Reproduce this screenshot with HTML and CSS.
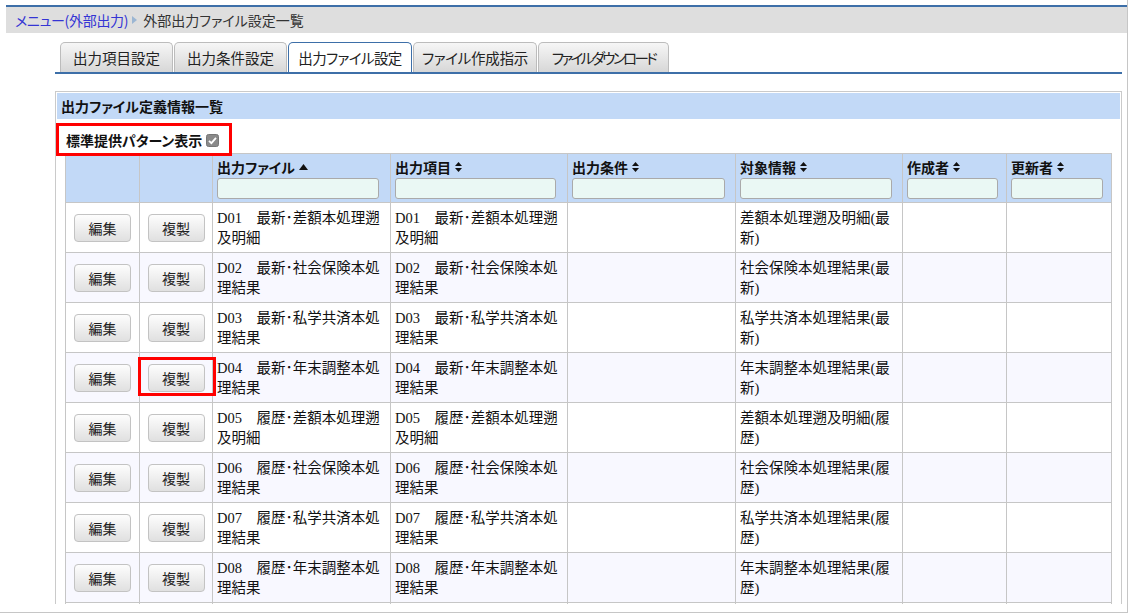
FILE: index.html
```html
<!DOCTYPE html>
<html lang="ja">
<head>
<meta charset="utf-8">
<title>外部出力ファイル設定一覧</title>
<link rel="stylesheet" href="styles.css">
</head>
<body>
<div class="window">
  <div class="viewport">
    <nav class="crumbs">
      <a class="crumb-link" href="#">メニュー(外部出力)</a>
      <span class="crumb-sep"></span>
      <span class="crumb-current">外部出力ファイル設定一覧</span>
    </nav>

    <div class="main">
      <ul class="tabs">
        <li class="tab">出力項目設定</li>
        <li class="tab">出力条件設定</li>
        <li class="tab tab-file is-active">出力ファイル設定</li>
        <li class="tab tab-make">ファイル作成指示</li>
        <li class="tab tab-dl">ファイルダウンロード</li>
      </ul>

      <section class="panel">
        <h2 class="panel-title">出力ファイル定義情報一覧</h2>
        <div class="std-toggle">
          <label class="std-label">標準提供パターン表示<span class="check"><svg width="13" height="13" viewBox="0 0 13 13"><rect x="0.5" y="0.5" width="12" height="12" rx="2" fill="#8a8a8a" stroke="#777"/><path d="M3 6.8 L5.4 9.2 L10 3.8" fill="none" stroke="#fff" stroke-width="1.8"/></svg></span></label>
          <span class="callout callout-toggle"></span>
        </div>

        <table class="grid">
          <colgroup>
            <col class="c-btn1"><col class="c-btn2"><col class="c-file"><col class="c-item"><col class="c-cond"><col class="c-target"><col class="c-user"><col class="c-user2">
          </colgroup>
          <thead>
            <tr>
              <th></th>
              <th></th>
              <th><div class="th-label">出力ファイル<svg class="sort" width="9" height="6" viewBox="0 0 9 6"><polygon points="0,6 4.5,0 9,6" fill="#111"/></svg></div><input class="filter" type="text"></th>
              <th><div class="th-label">出力項目<svg class="sort" width="7" height="10" viewBox="0 0 7 10"><polygon points="0,4 3.5,0 7,4" fill="#111"/><polygon points="0,6 3.5,10 7,6" fill="#111"/></svg></div><input class="filter" type="text"></th>
              <th><div class="th-label">出力条件<svg class="sort" width="7" height="10" viewBox="0 0 7 10"><polygon points="0,4 3.5,0 7,4" fill="#111"/><polygon points="0,6 3.5,10 7,6" fill="#111"/></svg></div><input class="filter" type="text"></th>
              <th><div class="th-label">対象情報<svg class="sort" width="7" height="10" viewBox="0 0 7 10"><polygon points="0,4 3.5,0 7,4" fill="#111"/><polygon points="0,6 3.5,10 7,6" fill="#111"/></svg></div><input class="filter" type="text"></th>
              <th><div class="th-label">作成者<svg class="sort" width="7" height="10" viewBox="0 0 7 10"><polygon points="0,4 3.5,0 7,4" fill="#111"/><polygon points="0,6 3.5,10 7,6" fill="#111"/></svg></div><input class="filter" type="text"></th>
              <th><div class="th-label">更新者<svg class="sort" width="7" height="10" viewBox="0 0 7 10"><polygon points="0,4 3.5,0 7,4" fill="#111"/><polygon points="0,6 3.5,10 7,6" fill="#111"/></svg></div><input class="filter" type="text"></th>
            </tr>
          </thead>
          <tbody>
            <tr>
              <td class="act"><button class="btn">編集</button></td>
              <td class="act"><button class="btn">複製</button></td>
              <td>D01　最新･差額本処理遡及明細</td>
              <td>D01　最新･差額本処理遡及明細</td>
              <td></td>
              <td>差額本処理遡及明細(最新)</td>
              <td></td>
              <td></td>
            </tr>
            <tr>
              <td class="act"><button class="btn">編集</button></td>
              <td class="act"><button class="btn">複製</button></td>
              <td>D02　最新･社会保険本処理結果</td>
              <td>D02　最新･社会保険本処理結果</td>
              <td></td>
              <td>社会保険本処理結果(最新)</td>
              <td></td>
              <td></td>
            </tr>
            <tr>
              <td class="act"><button class="btn">編集</button></td>
              <td class="act"><button class="btn">複製</button></td>
              <td>D03　最新･私学共済本処理結果</td>
              <td>D03　最新･私学共済本処理結果</td>
              <td></td>
              <td>私学共済本処理結果(最新)</td>
              <td></td>
              <td></td>
            </tr>
            <tr>
              <td class="act"><button class="btn">編集</button></td>
              <td class="act has-callout"><button class="btn">複製</button><span class="callout callout-copy"></span></td>
              <td>D04　最新･年末調整本処理結果</td>
              <td>D04　最新･年末調整本処理結果</td>
              <td></td>
              <td>年末調整本処理結果(最新)</td>
              <td></td>
              <td></td>
            </tr>
            <tr>
              <td class="act"><button class="btn">編集</button></td>
              <td class="act"><button class="btn">複製</button></td>
              <td>D05　履歴･差額本処理遡及明細</td>
              <td>D05　履歴･差額本処理遡及明細</td>
              <td></td>
              <td>差額本処理遡及明細(履歴)</td>
              <td></td>
              <td></td>
            </tr>
            <tr>
              <td class="act"><button class="btn">編集</button></td>
              <td class="act"><button class="btn">複製</button></td>
              <td>D06　履歴･社会保険本処理結果</td>
              <td>D06　履歴･社会保険本処理結果</td>
              <td></td>
              <td>社会保険本処理結果(履歴)</td>
              <td></td>
              <td></td>
            </tr>
            <tr>
              <td class="act"><button class="btn">編集</button></td>
              <td class="act"><button class="btn">複製</button></td>
              <td>D07　履歴･私学共済本処理結果</td>
              <td>D07　履歴･私学共済本処理結果</td>
              <td></td>
              <td>私学共済本処理結果(履歴)</td>
              <td></td>
              <td></td>
            </tr>
            <tr>
              <td class="act"><button class="btn">編集</button></td>
              <td class="act"><button class="btn">複製</button></td>
              <td>D08　履歴･年末調整本処理結果</td>
              <td>D08　履歴･年末調整本処理結果</td>
              <td></td>
              <td>年末調整本処理結果(履歴)</td>
              <td></td>
              <td></td>
            </tr>
            <tr>
              <td></td>
              <td></td>
              <td></td>
              <td></td>
              <td></td>
              <td></td>
              <td></td>
              <td></td>
            </tr>
          </tbody>
        </table>
      </section>
    </div>
  </div>
</div>
</body>
</html>
```

FILE: styles.css
```css
html, body {
  margin: 0;
  padding: 0;
  background: #fff;
}

body {
  font-family: "Noto Sans CJK JP", "Noto Sans", sans-serif;
  font-size: 14px;
  color: #222;
}

/* outer window frame */
.window {
  width: 1127px;
  height: 612px;
  border-right: 1px solid #c6c6c6;
  border-bottom: 1px solid #c6c6c6;
}

.viewport {
  height: 604px;
  overflow: hidden;
  box-sizing: border-box;
  padding: 5px 0 0 6px;
}

/* breadcrumb bar */
.crumbs {
  width: 1121px;
  height: 28px;
  box-sizing: border-box;
  border-top: 2px solid #3d6fa8;
  background: #dedede;
  display: flex;
  align-items: center;
  padding-left: 9px;
  font-size: 14px;
  font-feature-settings: "palt";
  line-height: 20px;
}

.crumb-link {
  color: #3434d4;
  text-decoration: none;
  letter-spacing: -0.3px;
}

.crumb-sep {
  width: 0;
  height: 0;
  border-left: 5px solid #9bb6d3;
  border-top: 4px solid transparent;
  border-bottom: 4px solid transparent;
  margin: 0 6px 0 4px;
}

.crumb-current {
  color: #333;
}

/* content column */
.main {
  margin-left: 49px;
  width: 1067px;
}

/* tab strip */
.tabs {
  list-style: none;
  margin: 9px 0 0 0;
  padding: 0 0 0 5px;
  height: 30px;
  border-bottom: 2px solid #3d6fa8;
  display: flex;
  gap: 1px;
}

.tab {
  height: 30px;
  box-sizing: border-box;
  padding: 0 12px;
  border: 1px solid #bcbcbc;
  border-bottom: none;
  border-radius: 5px 5px 0 0;
  background: linear-gradient(#f6f6f6, #d7d7d7);
  font-size: 14.5px;
  font-feature-settings: "palt";
  line-height: 29px;
  color: #222;
  white-space: nowrap;
  text-align: center;
}

.tab-file {
  width: 124px;
  padding: 0;
  letter-spacing: -0.6px;
}

.tab-make {
  width: 124px;
  padding: 0;
  letter-spacing: -0.3px;
}

.tab-dl {
  width: 131px;
  padding: 0;
  letter-spacing: -2.6px;
}

.tab.is-active {
  background: #fff;
  border-color: #3d6fa8;
}

/* list panel */
.panel {
  margin-top: 17px;
  border: 1px solid #cacaca;
  padding: 1px;
}

.panel-title {
  margin: 0;
  height: 26px;
  line-height: 26px;
  background: #c2d9f7;
  font-size: 14px;
  font-weight: bold;
  font-feature-settings: "palt";
  padding-left: 4px;
  color: #111;
}

.std-toggle {
  position: relative;
  height: 34px;
  box-sizing: border-box;
  padding: 11px 0 0 9px;
  line-height: 20px;
}

.std-label {
  display: inline-flex;
  align-items: center;
  font-size: 14px;
  font-weight: bold;
  font-feature-settings: "palt";
  color: #111;
}

.check {
  display: inline-flex;
  margin-left: 4px;
}

/* red highlight frames */
.callout {
  position: absolute;
  border: 3px solid #f00;
  pointer-events: none;
}

.callout-toggle {
  left: -1px;
  top: 4px;
  width: 170px;
  height: 27px;
}

.has-callout {
  position: relative;
}

.callout-copy {
  left: -2px;
  top: 4px;
  width: 72px;
  height: 33px;
}

/* data grid */
.grid {
  margin-left: 8px;
  width: 1046px;
  table-layout: fixed;
  border-collapse: collapse;
}

.c-btn1 { width: 74px; }
.c-btn2 { width: 73px; }
.c-file { width: 178px; }
.c-item { width: 177px; }
.c-cond { width: 168px; }
.c-target { width: 167px; }
.c-user { width: 104px; }
.c-user2 { width: 105px; }

.grid th,
.grid td {
  border: 1px solid #c6c6c6;
}

.grid th {
  background: #c2d9f7;
  text-align: left;
  vertical-align: top;
  padding: 3px 4px 3px 4px;
  height: 42px;
  font-weight: bold;
  font-size: 14px;
  font-feature-settings: "palt";
  color: #111;
}

.th-label {
  display: flex;
  align-items: center;
  height: 20px;
  line-height: 20px;
}

.sort {
  margin-left: 4px;
}

.filter {
  display: block;
  margin: 1px 0 0 0;
  width: 96%;
  height: 21px;
  box-sizing: border-box;
  border: 1px solid #aaa;
  border-radius: 3px;
  background: #eaf8f4;
  padding: 0 3px;
}

.grid tbody tr {
  height: 50px;
}

.grid tbody tr:nth-child(even) td {
  background: #f8f8ff;
}

.grid td {
  padding: 0 4px;
  vertical-align: middle;
  font-family: "Liberation Serif", "Noto Sans CJK JP", serif;
  font-size: 14.5px;
  line-height: 20px;
  color: #111;
}

.grid td.act {
  text-align: center;
  padding: 0;
}

.btn {
  width: 57px;
  height: 28px;
  border: 1px solid #c3c3c3;
  border-radius: 4px;
  background: linear-gradient(#fdfdfd, #e0e0e0);
  font-family: "Noto Sans CJK JP", sans-serif;
  font-size: 14px;
  color: #222;
  padding: 0;
  vertical-align: middle;
}
```
